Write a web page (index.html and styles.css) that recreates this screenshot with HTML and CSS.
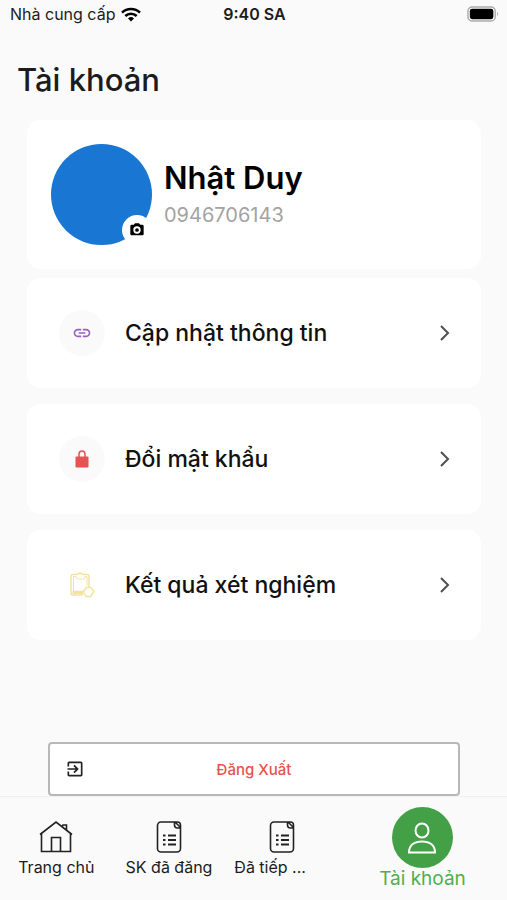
FILE: index.html
```html
<!DOCTYPE html>
<html lang="vi">
<head>
<meta charset="utf-8">
<meta name="viewport" content="width=device-width, initial-scale=1">
<title>Tài khoản</title>
<link rel="stylesheet" href="styles.css">
</head>
<body>
<div class="status">
  <div class="carrier">
    <span>Nhà cung cấp</span>
    <svg width="20" height="15" viewBox="0 0 20 15" fill="none" stroke="#000" stroke-width="2.6" aria-hidden="true">
      <path d="M1 5.600a13 13 0 0 1 18 0"/><path d="M4.300 9a8.200 8.200 0 0 1 11.400 0"/><path d="M10 14.500l-3-3a4.300 4.300 0 0 1 6 0z" fill="#000" stroke="none"/>
    </svg>
  </div>
  <span class="time">9:40 SA</span>
  <svg class="battery" width="32" height="16" viewBox="0 0 34 17" aria-hidden="true">
    <rect x="1" y="1" width="29" height="15" rx="4.500" fill="#fff" stroke="#aaa" stroke-width="1.500"/>
    <rect x="3" y="3" width="25" height="11" rx="2.500" fill="#000"/>
    <path d="M32 6.500c1.500.7 1.500 3.300 0 4z" fill="#aaa"/>
  </svg>
</div>

<main>
  <h1>Tài khoản</h1>
  <section class="card profile">
    <div class="avatar">
      <button class="camera" aria-label="Đổi ảnh">
        <svg width="16" height="16" viewBox="0 0 24 24" aria-hidden="true"><path fill-rule="evenodd" d="M9 2 7.170 4H4c-1.100 0-2 .9-2 2v12c0 1.100.9 2 2 2h16c1.100 0 2-.9 2-2V6c0-1.100-.9-2-2-2h-3.170L15 2H9zm3 15.500a5.500 5.500 0 1 1 0-11 5.500 5.500 0 0 1 0 11zm0-2.700a2.800 2.800 0 1 0 0-5.600 2.800 2.800 0 0 0 0 5.600z"/></svg>
      </button>
    </div>
    <div>
      <h2>Nhật Duy</h2>
      <p class="phone">0946706143</p>
    </div>
  </section>

  <nav class="menu" aria-label="Tài khoản">
    <a class="card row" href="#info">
      <span class="bubble"><svg width="20" height="20" viewBox="0 0 24 24" fill="#9a5fc4" aria-hidden="true"><path d="M3.900 12c0-1.710 1.390-3.100 3.100-3.100h4V7H7c-2.760 0-5 2.240-5 5s2.240 5 5 5h4v-1.900H7c-1.710 0-3.100-1.390-3.100-3.100zM8 13h8v-2H8v2zm9-6h-4v1.900h4c1.710 0 3.100 1.390 3.100 3.100s-1.390 3.100-3.100 3.100h-4V17h4c2.760 0 5-2.240 5-5s-2.240-5-5-5z"/></svg></span>
      <span class="name">Cập nhật thông tin</span>
      <svg class="chevron" width="12" height="18" viewBox="0 0 12 18" aria-hidden="true"><path d="M2 2l7 7-7 7"/></svg>
    </a>
    <a class="card row" href="#password">
      <span class="bubble"><svg width="14" height="18" viewBox="0 0 14 18" aria-hidden="true"><path d="M4 7V4.300a3 3.300 0 0 1 6 0V7" fill="none" stroke="#e55353" stroke-width="1.500"/><rect x="0.500" y="6.500" width="13" height="11" rx="1" fill="#e55353"/></svg></span>
      <span class="name">Đổi mật khẩu</span>
      <svg class="chevron" width="12" height="18" viewBox="0 0 12 18" aria-hidden="true"><path d="M2 2l7 7-7 7"/></svg>
    </a>
    <a class="card row" href="#results">
      <span class="bubble plain"><svg width="26" height="26" viewBox="0 0 26 26" fill="none" stroke="#f3e3a0" stroke-linejoin="round" aria-hidden="true"><path d="M14 23H4a2 2 0 0 1-2-2V4.500a2 2 0 0 1 2-2h3.500L11 1l3.500 1.500H18a2 2 0 0 1 2 2V15" stroke-width="1.500"/><path d="M4.500 20V4.500H7L8 7h7l1-2.500h2V14" stroke-width="1"/><path d="M3.500 20.500H14" stroke-width="3.500"/><path d="M17.500 15.500h4l3.500 4-3.500 5h-4.500l-2.500-4.500z" fill="#fff" stroke-width="1.500"/></svg></span>
      <span class="name">Kết quả xét nghiệm</span>
      <svg class="chevron" width="12" height="18" viewBox="0 0 12 18" aria-hidden="true"><path d="M2 2l7 7-7 7"/></svg>
    </a>
  </nav>

  <button class="logout">
    <svg width="20" height="20" viewBox="0 0 24 24" fill="#222" aria-hidden="true"><path d="M10.090 15.590 11.500 17l5-5-5-5-1.410 1.410L12.670 11H3v2h9.670l-2.580 2.590zM19 3H5c-1.110 0-2 .9-2 2v4h2V5h14v14H5v-4H3v4c0 1.100.89 2 2 2h14c1.100 0 2-.9 2-2V5c0-1.100-.9-2-2-2z"/></svg>
    <span>Đăng Xuất</span>
  </button>
</main>

<nav class="tabs" aria-label="Chính">
  <a class="tab" href="#home">
    <svg width="34" height="34" viewBox="0 0 34 34" aria-hidden="true"><path d="M1 14.500 17 2l16 12.500M2.500 13.500v18h29v-18M12.500 31.500v-14h9v14M23 6.500l1-1.500h3.500v5"/></svg>
    <span>Trang chủ</span>
  </a>
  <a class="tab" href="#posted">
    <svg width="26" height="34" viewBox="0 0 26 34" aria-hidden="true"><path d="M19 2H5a3.500 3.500 0 0 0-3.500 3.500v23A3.500 3.500 0 0 0 5 32h16a3.500 3.500 0 0 0 3.500-3.500V7.500zM18.500 2v3a3 3 0 0 0 3 3h3M19 2h2.500a3 3 0 0 1 3 3v3"/><path class="list" d="M7 15.500h2.500M12 15.500h8M7 20h2.500M12 20h8M7 24.500h2.500M12 24.500h8"/></svg>
    <span>SK đã đăng</span>
  </a>
  <a class="tab" href="#received">
    <svg width="26" height="34" viewBox="0 0 26 34" aria-hidden="true"><path d="M19 2H5a3.500 3.500 0 0 0-3.500 3.500v23A3.500 3.500 0 0 0 5 32h16a3.500 3.500 0 0 0 3.500-3.500V7.500zM18.500 2v3a3 3 0 0 0 3 3h3M19 2h2.500a3 3 0 0 1 3 3v3"/><path class="list" d="M7 15.500h2.500M12 15.500h8M7 20h2.500M12 20h8M7 24.500h2.500M12 24.500h8"/></svg>
    <span class="clipped">Đã tiếp ...</span>
  </a>
  <a class="tab active" href="#account" aria-current="page">
    <span class="disc"><svg width="30" height="34" viewBox="0 0 30 34" aria-hidden="true"><ellipse cx="15" cy="9.500" rx="6.500" ry="7"/><path d="M2 31.500c0-7 5-11 13-11s13 4 13 11z"/></svg></span>
    <span>Tài khoản</span>
  </a>
</nav>
</body>
</html>
```

FILE: styles.css
```css
* { box-sizing: border-box; }

body {
  margin: 0;
  min-height: 100vh;
  display: flex;
  flex-direction: column;
  background: #fafafa;
  color: #1c1c1c;
  font-family: Inter, "Noto Sans", sans-serif;
}

h1, h2, p { margin: 0; }
a { color: inherit; text-decoration: none; }
button { font-family: inherit; cursor: pointer; }
svg { flex: none; display: block; }

.status {
  display: grid;
  grid-template-columns: 1fr auto 1fr;
  align-items: center;
  height: 28px;
  padding: 0 8px 0 10px;
  font-size: 16px;
}
.carrier { display: flex; align-items: center; gap: 6px; }
.time { font-weight: 600; }
.battery { justify-self: end; }

main {
  flex: 1;
  display: flex;
  flex-direction: column;
  padding: 32px 26px 0 27px;
}

h1 {
  margin: 0 0 20px -10px;
  font-size: 31px;
  line-height: 40px;
  font-weight: 500;
}

.card { background: #fff; border-radius: 14px; }

.profile {
  display: flex;
  align-items: center;
  gap: 12px;
  height: 149px;
  padding: 0 24px;
}
.avatar {
  position: relative;
  width: 101px;
  height: 101px;
  border-radius: 50%;
  background: #1976d2;
}
.camera {
  position: absolute;
  right: 0;
  bottom: 0;
  display: grid;
  place-items: center;
  width: 30px;
  height: 30px;
  padding: 0;
  border: 0;
  border-radius: 50%;
  background: #fff;
}
h2 {
  font-size: 31px;
  line-height: 40px;
  font-weight: 600;
  color: #000;
}
.phone { font-size: 20px; line-height: 34px; color: #a3a3a3; }

.menu { display: flex; flex-direction: column; gap: 16px; margin-top: 9px; }
.row {
  display: flex;
  align-items: center;
  height: 110px;
  padding: 0 30px 0 32px;
}
.bubble {
  display: grid;
  place-items: center;
  width: 46px;
  height: 46px;
  border-radius: 50%;
  background: #fafafa;
}
.bubble.plain { background: none; }
.name {
  flex: 1;
  margin-left: 20px;
  font-size: 23px;
  font-weight: 500;
  color: #111;
}
.chevron { fill: none; stroke: #505050; stroke-width: 2; }

.logout {
  display: grid;
  grid-template-columns: 20px 1fr 20px;
  align-items: center;
  height: 54px;
  margin: auto 21px 0;
  padding: 0 15px;
  border: 2px solid #b8b8b8;
  border-radius: 4px;
  background: #fff;
  color: #e5534b;
  font-size: 15px;
  font-weight: 500;
}

.tabs {
  display: grid;
  grid-template-columns: 2fr 2fr 2fr 3fr;
  height: 104px;
  border-top: 1px solid #f0f0f0;
}
.tab {
  display: flex;
  flex-direction: column;
  align-items: center;
  padding-top: 23px;
  font-size: 16px;
  line-height: 26px;
}
.tab svg { fill: none; stroke: #222; stroke-width: 1.6; }
.tab .list { stroke-width: 2; }
.clipped { align-self: stretch; padding-left: 9px; }
.tab.active {
  padding-top: 10px;
  color: #4caf50;
  font-size: 19px;
  line-height: 22px;
}
.disc {
  display: grid;
  place-items: center;
  width: 61px;
  height: 61px;
  border-radius: 50%;
  background: #43a047;
}
.tab .disc svg { stroke: #fff; stroke-width: 2; }
```
